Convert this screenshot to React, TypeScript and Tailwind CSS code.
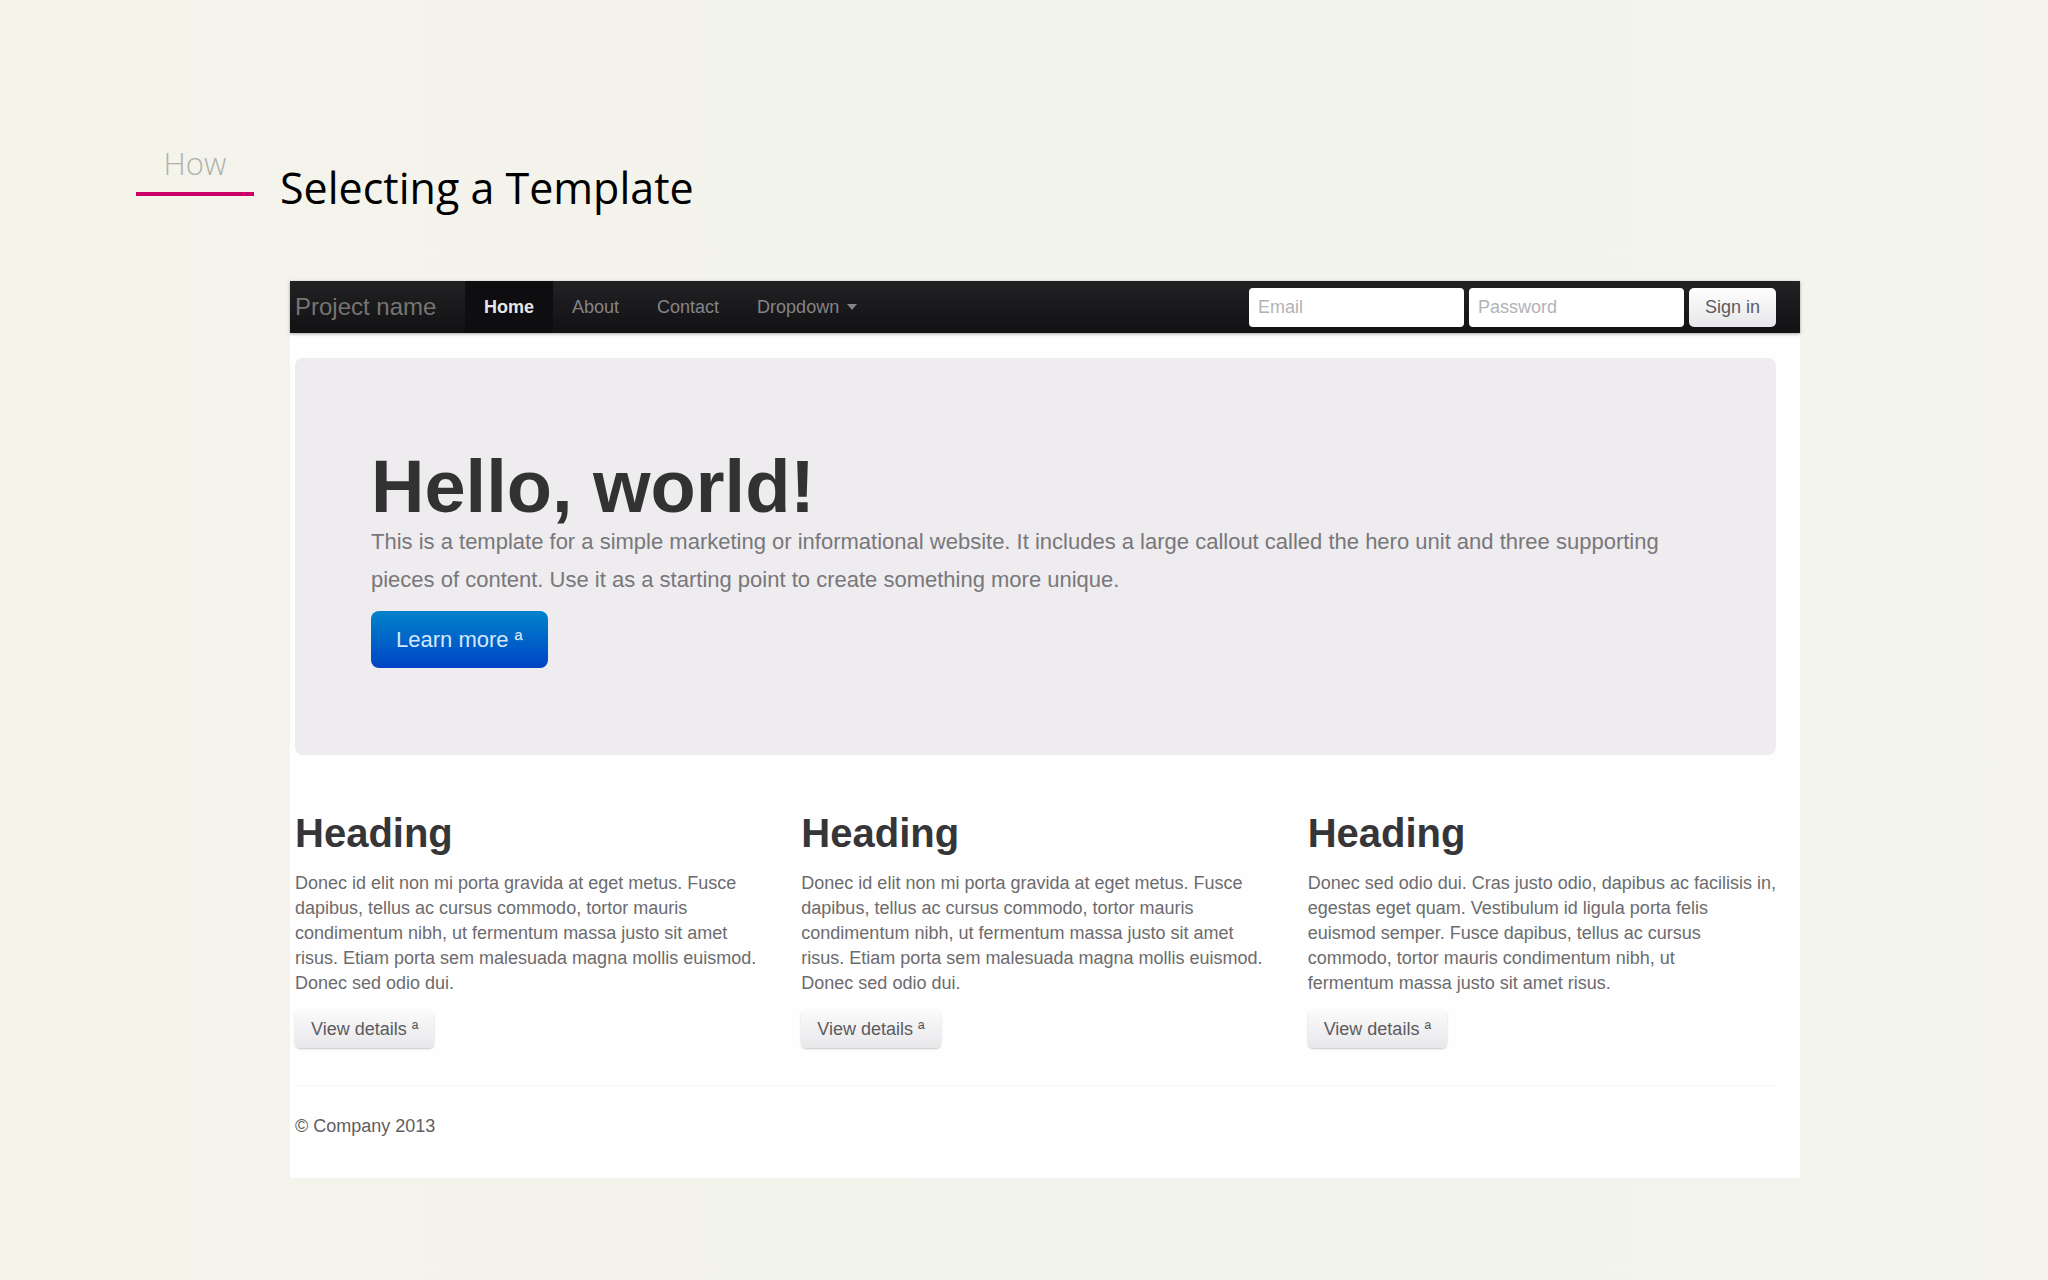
const columns = [
  {
    id: 'first',
    text: 'Donec id elit non mi porta gravida at eget metus. Fusce dapibus, tellus ac cursus commodo, tortor mauris condimentum nibh, ut fermentum massa justo sit amet risus. Etiam porta sem malesuada magna mollis euismod. Donec sed odio dui.',
  },
  {
    id: 'second',
    text: 'Donec id elit non mi porta gravida at eget metus. Fusce dapibus, tellus ac cursus commodo, tortor mauris condimentum nibh, ut fermentum massa justo sit amet risus. Etiam porta sem malesuada magna mollis euismod. Donec sed odio dui.',
  },
  {
    id: 'third',
    text: 'Donec sed odio dui. Cras justo odio, dapibus ac facilisis in, egestas eget quam. Vestibulum id ligula porta felis euismod semper. Fusce dapibus, tellus ac cursus commodo, tortor mauris condimentum nibh, ut\nfermentum massa justo sit amet risus.',
  },
];

function SlideTitle() {
  return (
    <header className="flex items-start gap-[26px] pl-[136px] pt-[143px] font-['Open_Sans',sans-serif]">
      <div className="w-[118px] border-b-4 border-[#cc0066] pb-[9px] text-center text-[31px] leading-10 font-light text-[#b0b1ab]">
        How
      </div>
      <h1 className="pt-[17px] text-[43px] leading-14 text-black">Selecting a Template</h1>
    </header>
  );
}

function NavBar() {
  return (
    <nav className="flex h-[52px] items-stretch justify-between bg-linear-to-b from-[#222124] to-[#121114] pr-6 pl-[5px] text-[18px] text-[#858487] shadow-[0_1px_3px_rgba(0,0,0,0.35)]">
      <div className="flex items-stretch">
        <a href="#" className="flex w-[170px] items-center text-[24px] text-[#757572]">
          Project name
        </a>
        <a href="#" className="flex items-center bg-[#0e0d10] px-[19px] font-bold text-[#e6e6e8]">
          Home
        </a>
        <a href="#about" className="flex items-center px-[19px]">
          About
        </a>
        <a href="#contact" className="flex items-center px-[19px]">
          Contact
        </a>
        <button type="button" className="flex items-center gap-2 px-[19px]">
          Dropdown
          <svg width="10" height="6" viewBox="0 0 10 6" fill="currentColor" aria-hidden="true">
            <path d="M0 0h10L5 6z" />
          </svg>
        </button>
      </div>
      <form className="flex items-center gap-[5px]" onSubmit={(e) => e.preventDefault()}>
        <input
          type="email"
          aria-label="Email"
          placeholder="Email"
          className="h-[39px] w-[215px] rounded-[4px] bg-white px-[9px] placeholder:text-[#b3b2b5]"
        />
        <input
          type="password"
          aria-label="Password"
          placeholder="Password"
          className="h-[39px] w-[215px] rounded-[4px] bg-white px-[9px] placeholder:text-[#b3b2b5]"
        />
        <button
          type="submit"
          className="h-[39px] rounded-[5px] bg-linear-to-b from-white to-[#e6e5e8] px-4 text-[#5c5b5e]"
        >
          Sign in
        </button>
      </form>
    </nav>
  );
}

function Hero() {
  return (
    <section className="rounded-[8px] bg-[#eeecef] px-[76px] pt-[93px] pb-[87px]">
      <h2 className="text-[74px] leading-18 font-bold text-[#333233]">Hello, world!</h2>
      <p className="max-w-[1300px] text-[22px] leading-[38px] text-[#78777a]">
        This is a template for a simple marketing or informational website. It includes a large callout called the hero
        unit and three supporting pieces of content. Use it as a starting point to create something more unique.
      </p>
      <a
        href="#more"
        className="mt-3 inline-flex h-[57px] items-center rounded-[8px] bg-linear-to-b from-[#0582cb] to-[#0443c4] px-[25px] text-[22px] text-[#d5e8fb]"
      >
        Learn more ª
      </a>
    </section>
  );
}

export default function App() {
  return (
    <main className="min-h-screen bg-linear-to-r from-[#f4f4eb] via-[#f3f3ed] to-[#f4f3ee] font-['Liberation_Sans',Arial,sans-serif]">
      <SlideTitle />
      <div className="mt-[65px] mr-[248px] ml-[290px] bg-[#fefefe]">
        <NavBar />
        <div className="pt-[25px] pr-6 pb-[39px] pl-[5px]">
          <Hero />
          <div className="grid grid-cols-3 gap-[38px] pt-[53px]">
            {columns.map((column) => (
              <section key={column.id}>
                <h3 className="text-[40px] leading-[50px] font-bold text-[#363538]">Heading</h3>
                <p className="mt-[13px] text-[18px] leading-[25px] whitespace-pre-line text-[#6c6b6e]">{column.text}</p>
                <a
                  href={`#${column.id}`}
                  className="mt-[14px] inline-flex h-[38px] items-center rounded-[5px] bg-linear-to-b from-[#fcfbfc] to-[#e7e6e9] px-4 text-[18px] text-[#5c5b5e] shadow-[0_1px_2px_rgba(0,0,0,0.22)]"
                >
                  View details ª
                </a>
              </section>
            ))}
          </div>
          <hr className="mt-[37px] border-[#f4f3f6]" />
          <footer className="pt-7 text-[18px] leading-[25px] text-[#5f5e61]">© Company 2013</footer>
        </div>
      </div>
    </main>
  );
}
